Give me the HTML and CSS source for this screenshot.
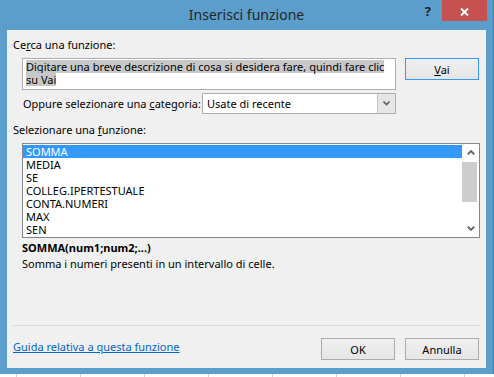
FILE: index.html
```html
<!DOCTYPE html>
<html lang="it">
<head>
    <meta charset="UTF-8">
    <title>Inserisci funzione</title>
    <link rel="stylesheet" href="styles.css">
</head>
<body>
    <div class="window">
        <div class="titlebar">
            <div></div>
            <div class="title">Inserisci funzione</div>
            <div class="controls">
                <span class="help">?</span>
                <span class="close">
                    <svg width="9" height="8" viewBox="0 0 9 8"><path d="M1 0.5 L8 7.5 M8 0.5 L1 7.5" stroke="#fff" stroke-width="2"/></svg>
                </span>
            </div>
        </div>

        <div class="client">
            <div class="label">Ce<u>r</u>ca una funzione:</div>
            <div class="search-row">
                <div class="search-box">
                    <span class="sel">Digitare una breve descrizione di cosa si desidera fare, quindi fare clic </span><br>
                    <span class="sel">su Vai</span>
                </div>
                <button class="btn default"><u>V</u>ai</button>
            </div>

            <div class="category-row">
                <span class="category-label">Oppure selezionare una <u>c</u>ategoria:</span>
                <div class="select">
                    <span class="select-value">Usate di recente</span>
                    <span class="select-arrow">
                        <svg width="7" height="5" viewBox="0 0 7 5"><path d="M0.5 0.5 L3.5 3.5 L6.5 0.5" stroke="#606060" stroke-width="1.6" fill="none"/></svg>
                    </span>
                </div>
            </div>

            <div class="label label-list">Selezionare una <u>f</u>unzione:</div>
            <div class="listbox">
                <ul class="items">
                    <li class="active">SOMMA</li>
                    <li>MEDIA</li>
                    <li>SE</li>
                    <li>COLLEG.IPERTESTUALE</li>
                    <li>CONTA.NUMERI</li>
                    <li>MAX</li>
                    <li>SEN</li>
                </ul>
                <div class="scrollbar">
                    <div class="sb-btn">
                        <svg width="8" height="5" viewBox="0 0 8 5"><path d="M0.7 4.3 L4 1 L7.3 4.3" stroke="#606060" stroke-width="1.8" fill="none"/></svg>
                    </div>
                    <div class="thumb"></div>
                    <div class="sb-btn sb-down">
                        <svg width="8" height="5" viewBox="0 0 8 5"><path d="M0.7 0.7 L4 4 L7.3 0.7" stroke="#606060" stroke-width="1.8" fill="none"/></svg>
                    </div>
                </div>
            </div>

            <div class="syntax">SOMMA(num1;num2;...)</div>
            <div class="desc">Somma i numeri presenti in un intervallo di celle.</div>

            <div class="separator"></div>
            <div class="footer">
                <a href="#" class="help-link">Guida relativa a questa funzione</a>
                <div class="buttons">
                    <button class="btn">OK</button>
                    <button class="btn">Annulla</button>
                </div>
            </div>
        </div>
    </div>
    <div class="sheet"></div>
</body>
</html>
```

FILE: styles.css
```css
/* reset */
* {
    box-sizing: border-box;
}
body {
    margin: 0;
    font-family: "Noto Sans", "Open Sans", sans-serif;
    font-size: 11px;
    color: #000;
    background: #fff;
}
ul {
    list-style: none;
    margin: 0;
    padding: 0;
}

/* window frame */
.window {
    width: 494px;
    height: 374px;
    background: #5b9ecb;
    border-right: 1px solid #3f7fae;
    padding-bottom: 6px;
}
.titlebar {
    height: 30px;
    display: grid;
    grid-template-columns: 1fr auto 1fr;
}
.title {
    font-size: 14px;
    line-height: 30px;
    color: #262626;
}
.controls {
    justify-self: end;
    display: flex;
    align-items: flex-start;
    padding-right: 6px;
}
.help {
    font-size: 13px;
    font-weight: bold;
    line-height: 15px;
    margin-top: 4px;
    margin-right: 11px;
    color: #1e1e1e;
}
.close {
    width: 45px;
    height: 21px;
    background: #c75050;
    display: flex;
    align-items: center;
    justify-content: center;
    padding-top: 2px;
}

/* dialog body */
.client {
    margin: 0 7px;
    width: 479px;
    height: 338px;
    background: #f0f0f0;
    padding: 7px 7px 0 6px;
}
.label {
    line-height: 15px;
}
.search-row {
    display: flex;
    gap: 9px;
    margin: 6px 0 0 9px;
}
.search-box {
    width: 374px;
    height: 32px;
    border: 1px solid #abadb3;
    background: #fff;
    padding: 1px 0 0 3px;
    line-height: 13px;
}
.sel {
    display: inline-block;
    height: 13px;
    background: #c8c8c8;
}
.btn {
    width: 74px;
    height: 22px;
    padding: 0;
    border: 1px solid #acacac;
    background: linear-gradient(#f0f0f0, #e5e5e5);
    font: inherit;
    color: #000;
}
.btn.default {
    border-color: #3399ff;
}

.category-row {
    width: 374px;
    margin: 3px 0 0 9px;
    display: flex;
    align-items: center;
    justify-content: space-between;
}
.category-label {
    margin-left: 1px;
}
.select {
    width: 194px;
    height: 21px;
    border: 1px solid #abadb3;
    background: #fff;
    display: flex;
}
.select-value {
    padding-left: 4px;
    line-height: 19px;
}
.select-arrow {
    margin-left: auto;
    width: 18px;
    background: #e6e6e6;
    border-left: 1px solid #c5c5c5;
    display: flex;
    align-items: center;
    justify-content: center;
}

.label-list {
    margin-top: 8px;
}
.listbox {
    width: 458px;
    height: 95px;
    margin: 6px 0 0 9px;
    border: 1px solid #828790;
    background: #fff;
    display: flex;
}
.items {
    flex: 1;
    padding-top: 1px;
}
.items li {
    height: 13px;
    line-height: 13px;
    padding-left: 3px;
}
.items .active {
    background: #3399ff;
    color: #fff;
}
.scrollbar {
    width: 17px;
    display: flex;
    flex-direction: column;
}
.sb-btn {
    height: 17px;
    display: flex;
    align-items: center;
    justify-content: center;
}
.sb-down {
    margin-top: auto;
}
.thumb {
    height: 40px;
    margin: 1px 2px 0 0;
    background: #cdcdcd;
}

.syntax {
    margin: 2px 0 0 9px;
    font-weight: bold;
    line-height: 15px;
}
.desc {
    margin: 1px 0 0 9px;
    line-height: 15px;
}

.separator {
    width: 467px;
    height: 1px;
    margin-top: 54px;
    background: #dadada;
}
.footer {
    margin-top: 12px;
    display: flex;
    justify-content: space-between;
    align-items: flex-start;
}
.help-link {
    margin-top: 1px;
    line-height: 15px;
    color: #0066cc;
}
.buttons {
    display: flex;
    gap: 10px;
}

/* sheet behind the dialog */
.sheet {
    height: 3px;
    background: repeating-linear-gradient(90deg, #fff 0 16px, #d4d4d4 16px 17px, #fff 17px 64px);
}
```
